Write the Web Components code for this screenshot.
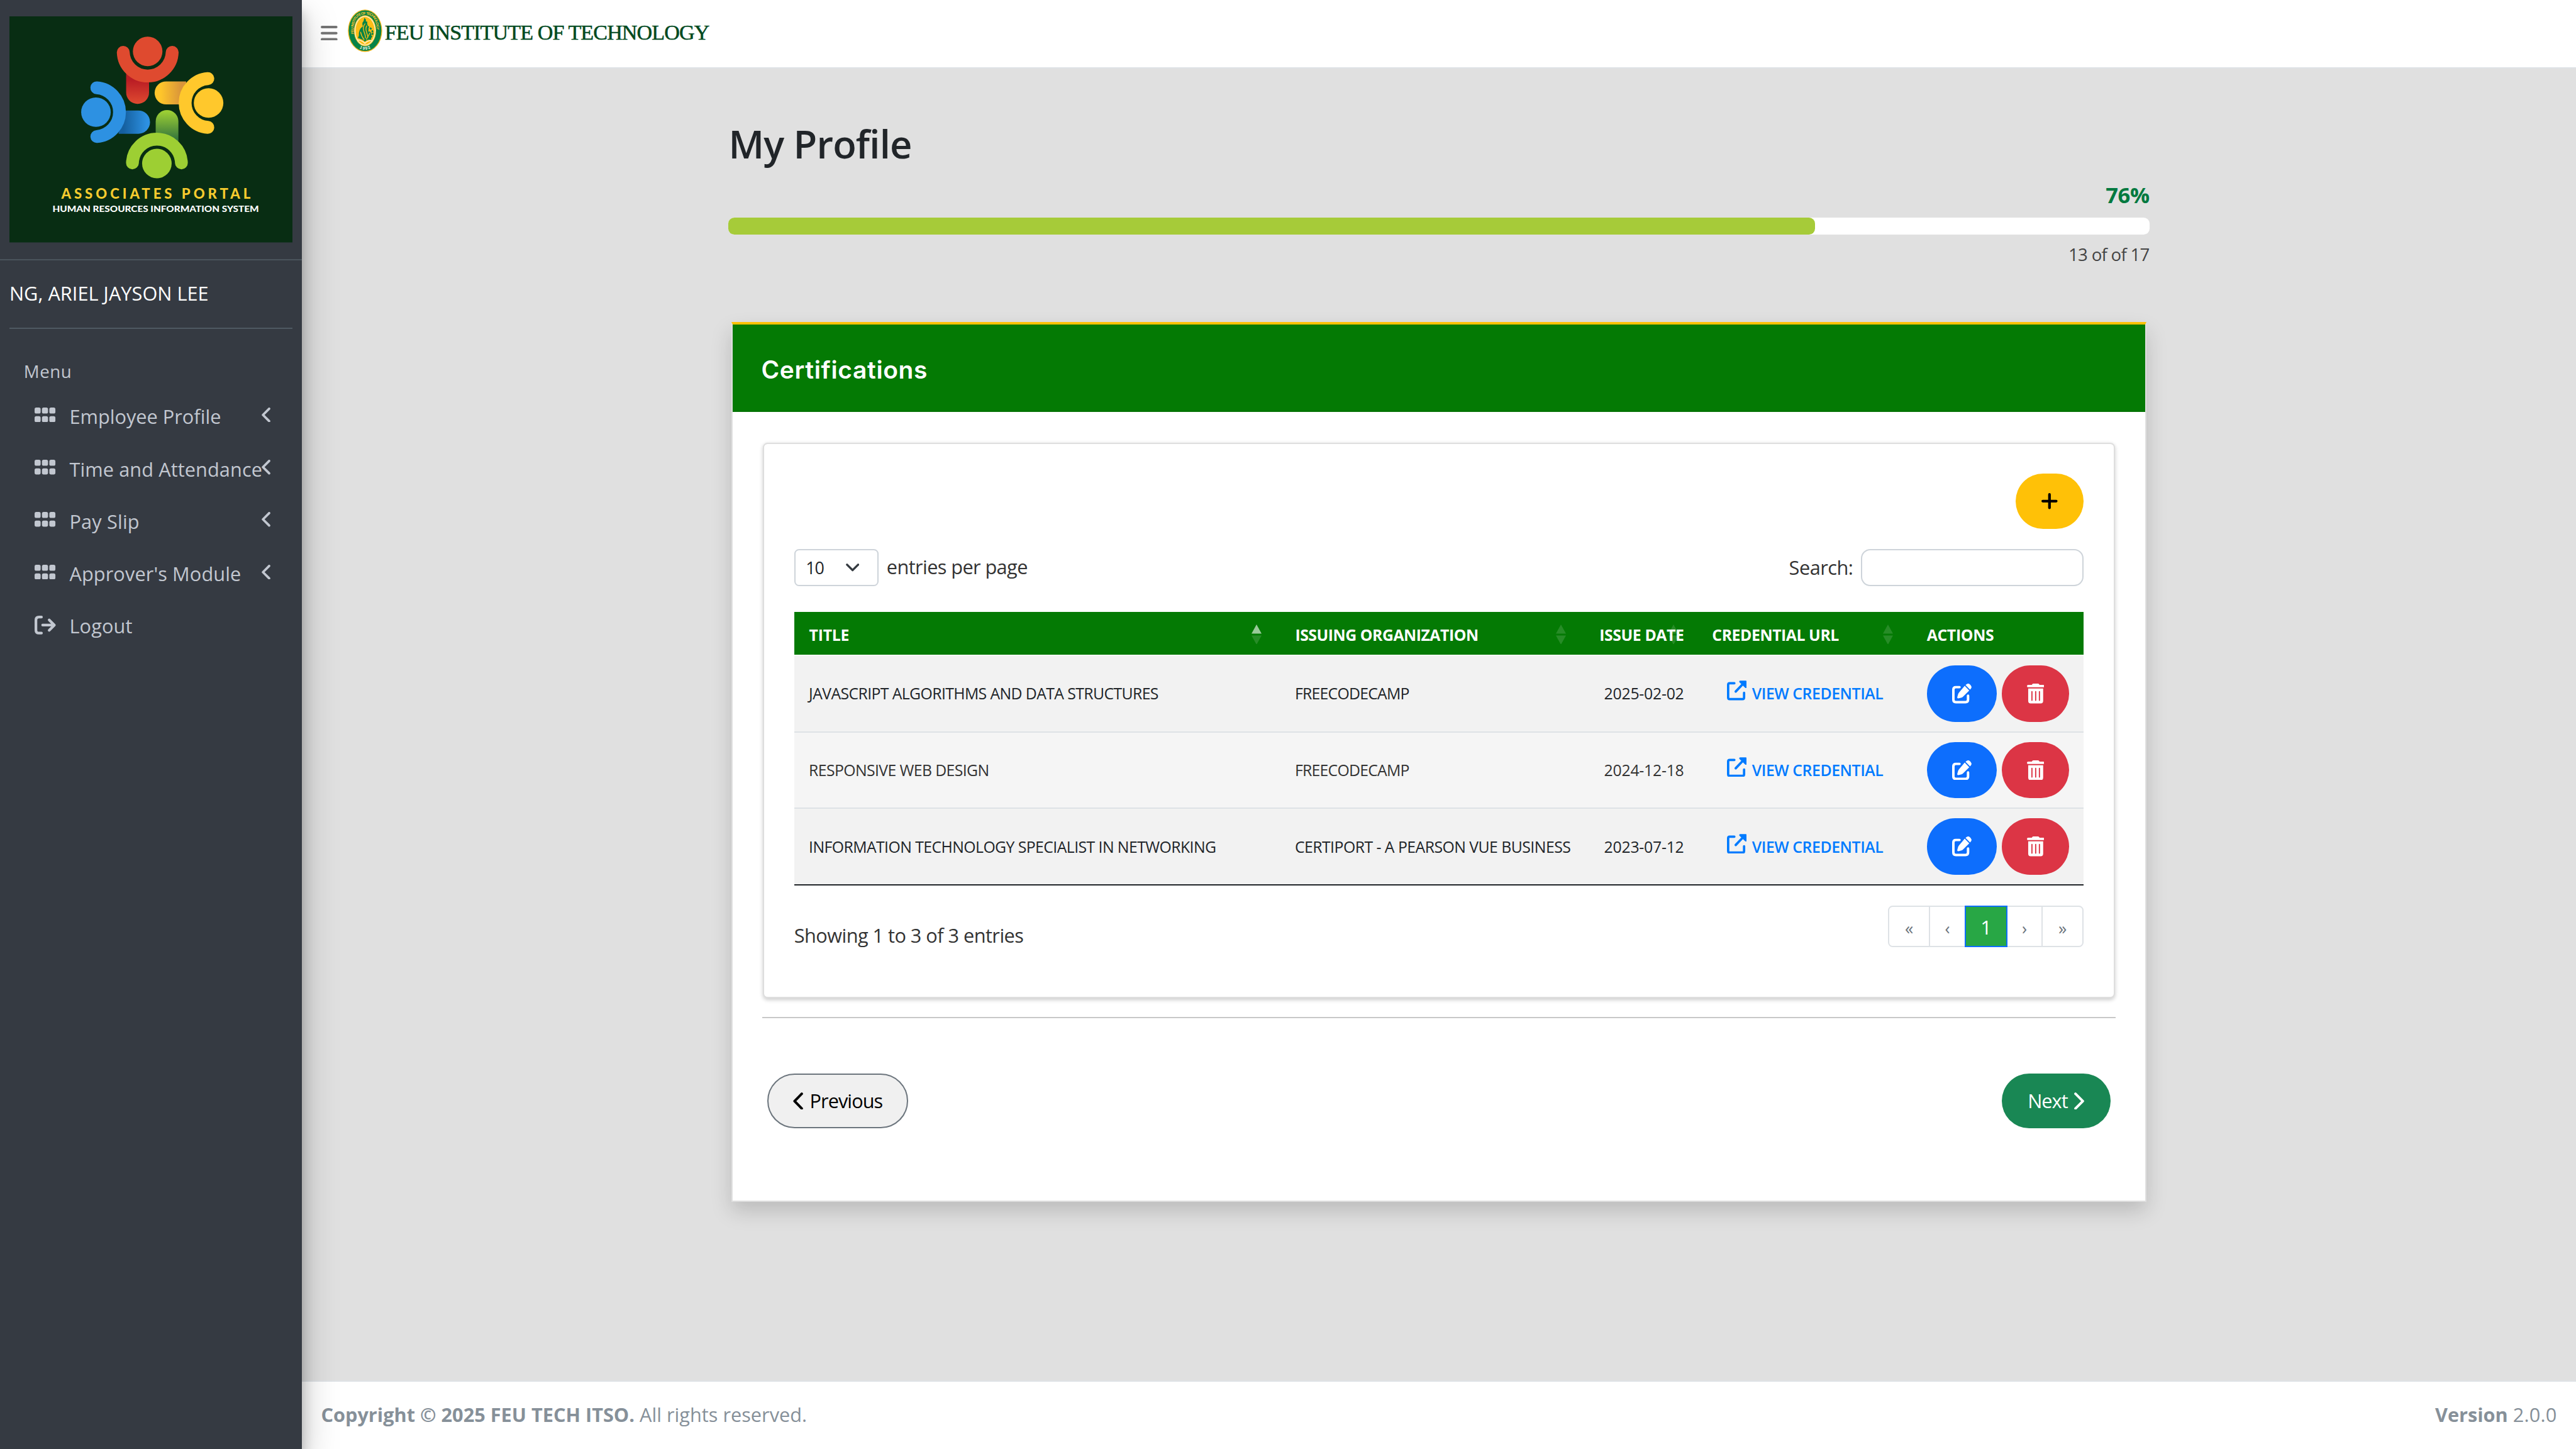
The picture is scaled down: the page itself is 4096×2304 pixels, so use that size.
<!DOCTYPE html>
<html lang="en">
<head>
<meta charset="utf-8">
<title>My Profile</title>
<style>
  html { font-size: 53.3333px; }
  body { margin: 0; font-family: "Open Sans", "Noto Sans", sans-serif; font-size: .576rem; color: #212529; background: #e0e0e0; overflow: hidden; }
</style>
</head>
<body>
<app-shell>
  <app-sidebar slot="side" user="NG, ARIEL JAYSON LEE">
    <menu-item icon="grid" w="4.52" arrow>Employee Profile</menu-item>
    <menu-item icon="grid" w="5.75" arrow>Time and Attendance</menu-item>
    <menu-item icon="grid" w="2.09" arrow>Pay Slip</menu-item>
    <menu-item icon="grid" w="5.12" arrow>Approver's Module</menu-item>
    <menu-item icon="logout" w="1.88">Logout</menu-item>
  </app-sidebar>
  <top-bar slot="top"></top-bar>
  <profile-page slot="main"></profile-page>
  <page-footer slot="foot"></page-footer>
</app-shell>

<script>
const BASE = `<style>:host{display:block;box-sizing:border-box}*{box-sizing:border-box}svg{display:block;flex:none}</style>`;
function define(name, render, after) {
  customElements.define(name, class extends HTMLElement {
    connectedCallback() {
      if (this.shadowRoot) return;
      this.attachShadow({ mode: 'open' }).innerHTML = BASE + render(this);
      if (after) after(this);
    }
  });
}

const ICONS = {
  grid: ['0 0 62 44', 62, 44, '<g fill="currentColor"><rect width="18" height="18" rx="5"/><rect x="22" width="18" height="18" rx="5"/><rect x="44" width="18" height="18" rx="5"/><rect y="26" width="18" height="18" rx="5"/><rect x="22" y="26" width="18" height="18" rx="5"/><rect x="44" y="26" width="18" height="18" rx="5"/></g>'],
  logout: ['0 0 64 56', 64, 56, '<g fill="none" stroke="currentColor" stroke-width="8" stroke-linecap="round" stroke-linejoin="round"><path d="M20.500 4H13Q4 4 4 13V43Q4 52 13 52H20.500M24 28H56M43.500 12.500L59 28L43.500 43.500"/></g>'],
  left: ['0 0 26 44', 26, 44, '<path d="M22.500 3.500L4 22L22.500 40.500" fill="none" stroke="currentColor" stroke-width="7" stroke-linecap="round" stroke-linejoin="round"/>'],
  prev: ['0 0 30 52', 30, 52, '<path d="M26 4L4.500 26L26 48" fill="none" stroke="currentColor" stroke-width="7.500" stroke-linecap="round" stroke-linejoin="round"/>'],
  next: ['0 0 31 52', 31, 52, '<path d="M4 4L26 26L4 48" fill="none" stroke="currentColor" stroke-width="7.500" stroke-linecap="round" stroke-linejoin="round"/>'],
  bars: ['0 0 50 44', 50, 44, '<g fill="currentColor"><rect width="50" height="7.600" rx="3.800"/><rect y="18.200" width="50" height="7.600" rx="3.800"/><rect y="36.400" width="50" height="7.600" rx="3.800"/></g>'],
  plus: ['0 0 48 48', 48, 48, '<path d="M24 4V44M4 24H44" fill="none" stroke="currentColor" stroke-width="8" stroke-linecap="round"/>'],
  down: ['0 0 40 24', 40, 24, '<path d="M3.500 3.500L20 20L36.500 3.500" fill="none" stroke="currentColor" stroke-width="6.400" stroke-linecap="round" stroke-linejoin="round"/>'],
  link: ['0 0 59 59', 59, 59, '<path d="M22 8H8Q3.500 8 3.500 12.500V51Q3.500 55.500 8 55.500H46.500Q51 55.500 51 51V37" fill="none" stroke="currentColor" stroke-width="7" stroke-linecap="round" stroke-linejoin="round"/><path d="M26 33L49 9" fill="none" stroke="currentColor" stroke-width="7" stroke-linecap="round"/><path d="M39 .500H56Q58.500 .500 58.500 3V20Q58 24 54.500 22L37 5Q35.500 1 39 .500Z" fill="currentColor"/>'],
  edit: ['0 0 58 59', 58, 59, '<path d="M22 10.500H11Q3.700 10.500 3.700 18V48Q3.700 55.300 11 55.300H40Q47.500 55.300 47.500 48V36" fill="none" stroke="currentColor" stroke-width="7.400" stroke-linecap="round"/><path d="M37.500 6.500L51 20.500L32 39.500Q30.500 41 28 41.800L18.500 44.300Q14.500 44.500 15.300 40.500L18 31Q18.600 28.500 20.500 26.500Z" fill="currentColor"/><path d="M40 4L43 1.700Q48.500-1.800 53.500 2.800L55.500 5Q60 10.500 55.500 15.500L53.300 17.800Z" fill="currentColor"/>'],
  trash: ['0 0 52 59', 52, 59, '<path fill="currentColor" fill-rule="evenodd" d="M3.700 3.700H14.500L16.500 1Q17.300 0 19 0H33Q34.700 0 35.500 1L37.500 3.700H48.300Q52 3.700 52 7.400T48.300 11H3.700Q0 11 0 7.400T3.700 3.700ZM3.700 14.700H48.300V51.700Q48.300 59 41 59H11Q3.700 59 3.700 51.700ZM14.800 22Q13 22 13 24V49.500Q13 51.500 14.800 51.500T16.600 49.500V24Q16.600 22 14.800 22ZM26 22Q24.200 22 24.200 24V49.500Q24.200 51.500 26 51.500T27.800 49.500V24Q27.800 22 26 22ZM37.200 22Q35.400 22 35.400 24V49.500Q35.400 51.500 37.200 51.500T39 49.500V24Q39 22 37.200 22Z"/>']
};
define('ui-icon', el => {
  const [box, w, h, body] = ICONS[el.getAttribute('name')];
  return `<style>:host{display:block;flex:none}</style><svg viewBox="${box}" style="width:${w / 100}rem;height:${h / 100}rem">${body}</svg>`;
});

/* One-line label whose tracking is set so that it spans w rem. */
define('fit-text', () => `<style>:host{display:inline-block;white-space:pre;flex:none}</style><slot></slot>`, el => {
  const want = parseFloat(el.getAttribute('w')) * 53.3333;
  if (!want) return;
  const range = document.createRange();
  range.selectNodeContents(el);
  const have = range.getBoundingClientRect().width;
  el.style.letterSpacing = ((want - have) / el.textContent.length).toFixed(3) + 'px';
});

define('portal-logo', () => `
<svg viewBox="45 77 1322 1057" preserveAspectRatio="none" style="width:100%;height:100%">
  <defs>
    <linearGradient id="r" x1="0" y1="0" x2="0" y2="1"><stop offset=".2" stop-color="#b91c24"/><stop offset="1" stop-color="#df4a30"/></linearGradient>
    <linearGradient id="y" x1="0" y1="0" x2="1" y2="0"><stop offset=".2" stop-color="#fec52b"/><stop offset=".85" stop-color="#d9943a"/></linearGradient>
    <linearGradient id="b" x1="0" y1="0" x2="1" y2="0"><stop offset=".15" stop-color="#155f9e"/><stop offset=".9" stop-color="#2d91e2"/></linearGradient>
    <linearGradient id="g" x1="0" y1="0" x2="0" y2="1"><stop offset=".05" stop-color="#9ccf34"/><stop offset=".9" stop-color="#3a7a3c"/></linearGradient>
  </defs>
  <rect x="45" y="77" width="1322" height="1057" fill="#082d13"/>
  <path d="M590 345H697V433A53.500 53.500 0 0 1 590 433Z" fill="url(#r)"/>
  <path d="M870 381V489H777A54 54 0 0 1 777 381Z" fill="url(#y)"/>
  <path d="M555 626V517H647A54.500 54.500 0 0 1 647 626Z" fill="url(#b)"/>
  <path d="M728 660V568A53 53 0 0 1 834 568V660Z" fill="url(#g)"/>
  <g fill="none" stroke-width="60" stroke-linecap="round">
    <path d="M576.500 245A114.300 114.300 0 0 0 805 245" stroke="#df4a2f"/>
    <path d="M971.500 368A114.300 114.300 0 0 0 971.500 596" stroke="#ffc82c"/>
    <path d="M453 411A114.300 114.300 0 0 1 453 639" stroke="#2d91e2"/>
    <path d="M619.500 762A114.300 114.300 0 0 1 848 762" stroke="#9dcf33"/>
  </g>
  <circle cx="690.500" cy="241" r="69" fill="#df4a2f"/><circle cx="975" cy="482" r="69" fill="#ffc82c"/>
  <circle cx="449" cy="525" r="69" fill="#2d91e2"/><circle cx="733.500" cy="765" r="69" fill="#9dcf33"/>
  <g font-family="Lato, sans-serif" font-weight="900">
    <text x="287" y="929" font-size="65" fill="#f6cb2e" textLength="884">ASSOCIATES PORTAL</text>
    <text x="246" y="993" font-size="41" fill="#fff" textLength="964" lengthAdjust="spacingAndGlyphs">HUMAN RESOURCES INFORMATION SYSTEM</text>
  </g>
</svg>`);

define('menu-item', el => `
<style>
  :host{display:flex;align-items:center;height:1.56rem;padding-left:1.04rem;color:#c2c7d0}
  .i{width:.64rem;margin-right:.39rem;margin-bottom:${el.getAttribute('icon') === 'grid' ? '.1rem' : '.04rem'}}
  .t{width:5.73rem;display:flex}
  .a{margin-bottom:.1rem}
</style>
<div class="i"><ui-icon name="${el.getAttribute('icon')}"></ui-icon></div>
<div class="t"><fit-text w="${el.getAttribute('w')}">${el.textContent}</fit-text></div>
${el.hasAttribute('arrow') ? '<ui-icon class="a" name="left"></ui-icon>' : ''}`);

define('app-sidebar', el => `
<style>
  :host{height:43.2rem;background:#353a42;box-shadow:0 .5rem 1.01rem rgba(0,0,0,.25),0 .36rem .36rem rgba(0,0,0,.22)}
  .brand{height:7.76rem;padding:.49rem .28rem 0;border-bottom:2px solid #4b545c}
  portal-logo{height:6.74rem}
  .user{margin:0 .28rem;height:2.04rem;padding-bottom:.05rem;display:flex;align-items:center;color:#fff;border-bottom:2px solid #4f5962}
  .menu{margin:.77rem 0 0 .71rem;font-size:.518rem;line-height:1rem;color:#c2c7d0}
  nav{margin-top:.07rem}
</style>
<div class="brand"><portal-logo></portal-logo></div>
<div class="user"><fit-text w="5.94">${el.getAttribute('user')}</fit-text></div>
<div class="menu"><fit-text w="1.43">Menu</fit-text></div>
<nav><slot></slot></nav>`);

define('school-seal', () => `
<svg viewBox="0 0 206 254" style="width:1.03rem;height:1.27rem">
  <defs><path id="arc" d="M23 150C10 60 50 16 103 16S196 60 183 150"/><path id="low" d="M60 224Q103 258 146 224"/></defs>
  <ellipse cx="103" cy="127" rx="102" ry="126" fill="#f0b418"/>
  <ellipse cx="103" cy="127" rx="97" ry="121" fill="#078347"/>
  <ellipse cx="103" cy="127" rx="66" ry="92" fill="#f8c63a"/>
  <ellipse cx="103" cy="127" rx="62" ry="88" fill="#fff3d0"/>
  <ellipse cx="103" cy="127" rx="57" ry="83" fill="#fdbd16"/>
  <circle cx="112" cy="140" r="36" fill="none" stroke="#078347" stroke-width="10" stroke-dasharray="12 7"/>
  <path d="M99 50L108 60V72H116V88Q128 106 122 132Q146 128 140 168L138 182Q118 176 102 192Q84 176 60 170L66 158Q62 120 90 100Q82 80 94 70Z" fill="#078347"/>
  <path d="M104 84Q86 104 96 130T106 172M114 96Q104 112 112 136T120 168M76 134Q80 158 98 182M132 140Q122 160 110 180" fill="none" stroke="#fdbd16" stroke-width="5"/>
  <path d="M56 182Q84 182 102 202Q120 184 142 186" fill="none" stroke="#fff3d0" stroke-width="6"/>
  <g font-family="Liberation Sans, sans-serif" font-weight="700">
    <text font-size="22" fill="#fbc02d" dy="14"><textPath href="#arc" textLength="330" startOffset="2">FEU INSTITUTE OF TECHNOLOGY</textPath></text>
    <text font-size="25" fill="#e9f5ec"><textPath href="#low" startOffset="12" textLength="70">1992</textPath></text>
  </g>
</svg>`);

define('top-bar', () => `
<style>
  :host{display:flex;height:2.04rem;padding-left:.57rem;background:#fff;border-bottom:2px solid #dee2e6;align-items:flex-start}
  .b{margin-top:.76rem;color:#757575} school-seal{margin:.29rem 0 0 .3rem}
  .n{margin:.58rem 0 0 .07rem;font-family:"Liberation Serif",serif;font-size:.64rem;line-height:.8rem;color:#00491e;-webkit-text-stroke:.01rem #00491e}
</style>
<ui-icon class="b" name="bars"></ui-icon><school-seal></school-seal>
<fit-text class="n" w="9.67">FEU INSTITUTE OF TECHNOLOGY</fit-text>`);

define('page-footer', () => `
<style>
  :host{display:flex;justify-content:space-between;align-items:center;height:2.04rem;padding:0 .57rem .06rem;background:#fff;border-top:2px solid #dee2e6;color:#869099}
  b{font-weight:700}
</style>
<div><fit-text w="9.5"><b>Copyright © 2025 FEU TECH ITSO. </b></fit-text><fit-text w="4.99">All rights reserved.</fit-text></div>
<div><fit-text w="2.32"><b>Version </b></fit-text><fit-text w="1.31">2.0.0</fit-text></div>`);

define('pill-button', el => `
<style>
  :host{display:flex;align-items:center;justify-content:center;height:1.64rem;border-radius:.82rem;flex:none}
  :host([kind=add]){width:2.04rem;background:#ffc107;color:#000}
  :host([kind=edit]){width:2.08rem;height:1.68rem;border-radius:.84rem;background:#0d6efd;color:#fff}
  :host([kind=del]){width:2rem;height:1.68rem;border-radius:.84rem;background:#dc3545;color:#fff}
  :host([kind=prev]){width:4.2rem;background:#f0f0f0;border:2px solid #6c757d;color:#000;gap:.2rem}
  :host([kind=next]){width:3.24rem;background:#198754;color:#fff;gap:.2rem}
</style><slot></slot>`);

define('sort-head', el => `
<style>
  :host{position:relative;display:flex;align-items:center;padding:.08rem .4rem 0 .45rem;height:1.28rem}
  .s{position:absolute;right:.55rem;top:.37rem;width:.3rem;height:.6rem;color:#fff}
  fit-text{position:relative}
</style>
${el.hasAttribute('sort') ? `<svg class="s" viewBox="0 0 30 60"><path d="M15 0L30 27H0Z" fill="currentColor" opacity="${el.getAttribute('sort') === 'asc' ? .6 : .14}"/><path d="M0 33H30L15 60Z" fill="currentColor" opacity=".14"/></svg>` : ''}
<fit-text w="${el.getAttribute('w')}">${el.textContent}</fit-text>`);

const COLS = 'display:grid;grid-template-columns:14.49rem 9.07rem 3.36rem 6.4rem 5.12rem;align-items:center;';
define('cert-row', el => {
  const g = n => el.getAttribute(n);
  return `
<style>
  :host{${COLS}height:2.28rem;font-size:.465rem;background:#f2f2f2;color:#212529;border-bottom:2px solid #dee2e6}
  :host([even]){background:#f5f5f5;color:#333}
  :host([last]){border-bottom-color:#212529}
  .c{padding-left:.44rem;display:flex} .d{justify-content:flex-end;padding:0 .39rem 0 0}
  .l{padding-left:.89rem;gap:.16rem;align-items:center;color:#007bff;font-weight:600}
  .l ui-icon{margin-bottom:.18rem} .a{padding-left:.45rem;gap:.16rem}
</style>
<div class="c"><fit-text w="${g('tw')}">${g('name')}</fit-text></div>
<div class="c"><fit-text w="${g('ow')}">${g('org')}</fit-text></div>
<div class="c d"><fit-text w="2.38">${g('date')}</fit-text></div>
<div class="c l"><ui-icon name="link"></ui-icon><fit-text w="3.91">VIEW CREDENTIAL</fit-text></div>
<div class="c a"><pill-button kind="edit"><ui-icon name="edit"></ui-icon></pill-button><pill-button kind="del"><ui-icon name="trash"></ui-icon></pill-button></div>`;
});

define('cert-table', () => `
<style>
  .h{${COLS}height:1.28rem;background:#047a04;color:#fff;font-weight:700;font-size:.465rem;margin-bottom:.04rem}
</style>
<div class="h">
  <sort-head sort="asc" w="1.19">TITLE</sort-head><sort-head sort="none" w="5.46">ISSUING ORGANIZATION</sort-head>
  <sort-head sort="none" w="2.52">ISSUE DATE</sort-head><sort-head sort="none" w="3.78">CREDENTIAL URL</sort-head><sort-head w="2">ACTIONS</sort-head>
</div>
<cert-row name="JAVASCRIPT ALGORITHMS AND DATA STRUCTURES" tw="10.42" org="FREECODECAMP" ow="3.41" date="2025-02-02"></cert-row>
<cert-row even name="RESPONSIVE WEB DESIGN" tw="5.37" org="FREECODECAMP" ow="3.41" date="2024-12-18"></cert-row>
<cert-row last name="INFORMATION TECHNOLOGY SPECIALIST IN NETWORKING" tw="12.14" org="CERTIPORT - A PEARSON VUE BUSINESS" ow="8.22" date="2023-07-12"></cert-row>`);

define('page-nav', () => `
<style>
  :host{display:flex;width:5.84rem;height:1.24rem;border:2px solid #dee2e6;border-radius:.14rem;color:#6c757d;font-size:.504rem}
  span{display:flex;align-items:center;justify-content:center;padding-top:.1rem}
  .f{width:1.19rem}.p{width:1.06rem;border-left:2px solid #dee2e6}.n{flex:1;border-right:2px solid #dee2e6}
  .on{width:1.28rem;margin:-2px 0;background:#28a745;border:2px solid #0d6efd;color:#fff;font-size:.576rem;padding:.04rem 0 0}
</style>
<span class="f">«</span><span class="p">‹</span><span class="on">1</span><span class="n">›</span><span class="f">»</span>`);

define('cert-panel', () => `
<style>
  :host{height:16.57rem;border:2px solid #dedede;border-radius:.14rem;padding:.89rem .9rem 0;background:#fff;box-shadow:0 .04rem .11rem rgba(0,0,0,.2)}
  .add{display:flex;justify-content:flex-end}
  .tools{margin-top:.6rem;height:1.12rem;display:flex;align-items:center;justify-content:space-between;color:#333}
  .g{display:flex;align-items:center}
  .sel{width:2.52rem;height:1.12rem;border:2px solid #ced4da;border-radius:.14rem;display:flex;align-items:center;padding-left:.31rem;font-size:.504rem;color:#212529;margin-right:.24rem}
  .sel ui-icon{margin-left:.66rem;color:#343a40}
  .inp{width:6.64rem;height:1.12rem;border:2px solid #ced4da;border-radius:.28rem;margin-left:.24rem}
  .e{margin-bottom:.05rem}
  cert-table{margin-top:.76rem}
  .bot{margin-top:.6rem;display:flex;justify-content:space-between;color:#333}
  .bot>fit-text{line-height:1.24rem;padding-top:.26rem}
</style>
<div class="add"><pill-button kind="add"><ui-icon name="plus"></ui-icon></pill-button></div>
<div class="tools">
  <div class="g"><div class="sel"><fit-text w=".54">10</fit-text><ui-icon name="down"></ui-icon></div><fit-text class="e" w="4.2">entries per page</fit-text></div>
  <div class="g"><fit-text w="1.91">Search:</fit-text><div class="inp"></div></div>
</div>
<cert-table></cert-table>
<div class="bot"><fit-text w="6.84">Showing 1 to 3 of 3 entries</fit-text><page-nav></page-nav></div>`);

define('profile-page', () => `
<style>
  :host{width:42.36rem;margin:0 auto;padding-top:1.54rem}
  h1{margin:0;height:1.4rem;line-height:1.4rem;font-size:1.152rem;font-weight:600}
  .pct{margin-top:.4rem;height:.88rem;line-height:.88rem;font-size:.648rem;font-weight:700;color:#00793f;text-align:right}
  .bar{margin-top:.22rem;height:.52rem;border-radius:.18rem;background:#fff}
  .fill{width:32.4rem;height:100%;border-radius:.18rem;background:#a6cb39}
  .cnt{margin-top:.24rem;height:.7rem;line-height:.7rem;font-size:.518rem;color:#444;text-align:right}
  .card{margin:1.66rem .08rem 0;height:26.24rem;background:#fff;border:2px solid #e0e0e0;border-top:.08rem solid #ffc107;box-shadow:0 .29rem .58rem rgba(0,0,0,.17)}
  h2{margin:0;height:2.6rem;padding:.12rem 0 0 .86rem;display:flex;align-items:center;background:#047a04;border-bottom:2px solid #047204;color:#fff;font:600 .73rem Inter,sans-serif}
  .body{padding:.92rem .9rem 0}
  hr{margin:.55rem -.02rem 0;border:0;height:2px;background:#c8c8c8}
  .nav{margin-top:1.65rem;padding:0 .14rem;display:flex;justify-content:space-between}
</style>
<h1><fit-text w="5.46">My Profile</fit-text></h1>
<div class="pct"><fit-text w="1.3">76%</fit-text></div>
<div class="bar"><div class="fill"></div></div>
<div class="cnt"><fit-text w="2.41">13 of of 17</fit-text></div>
<section class="card">
  <h2><fit-text w="4.96">Certifications</fit-text></h2>
  <div class="body">
    <cert-panel></cert-panel>
    <hr>
    <div class="nav">
      <pill-button kind="prev"><ui-icon name="prev"></ui-icon><fit-text w="2.17">Previous</fit-text></pill-button>
      <pill-button kind="next"><fit-text w="1.19">Next</fit-text><ui-icon name="next"></ui-icon></pill-button>
    </div>
  </div>
</section>`);

define('app-shell', () => `
<style>
  :host{display:flex;width:76.8rem;height:43.2rem}
  .side{width:9rem;flex:none;position:relative;z-index:2}
  .col{flex:1;display:flex;flex-direction:column;min-width:0;background:#e0e0e0}
  .mid{flex:1;min-height:0}
</style>
<div class="side"><slot name="side"></slot></div>
<div class="col"><slot name="top"></slot><div class="mid"><slot name="main"></slot></div><slot name="foot"></slot></div>`);
</script>
</body>
</html>
